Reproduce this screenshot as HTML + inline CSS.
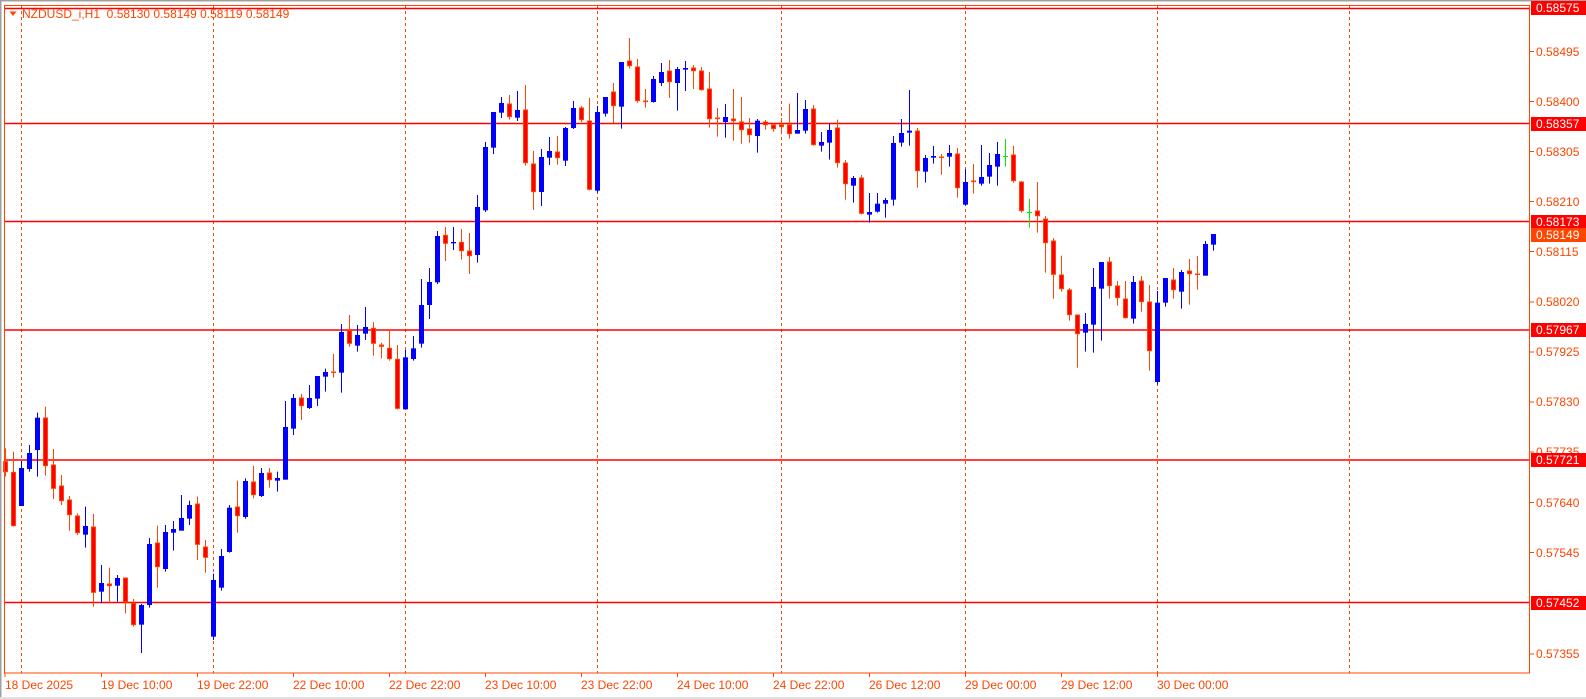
<!DOCTYPE html>
<html><head><meta charset="utf-8">
<style>
html,body{margin:0;padding:0;background:#fff;}
body{width:1586px;height:699px;position:relative;overflow:hidden;font-family:"Liberation Sans",sans-serif;}
svg{position:absolute;left:0;top:0;}
.lbl{position:absolute;font-size:12px;color:#ff4500;line-height:14px;white-space:nowrap;}
.box{position:absolute;left:1531px;width:55px;height:14px;background:#ff0000;color:#fff;font-size:12px;line-height:14px;padding-left:5px;box-sizing:border-box;}
</style></head><body>
<svg id="c" width="1586" height="699" xmlns="http://www.w3.org/2000/svg">
<rect x="0" y="0" width="1586" height="1.5" fill="#a0a0a0"/>
<rect x="0" y="0" width="1.5" height="699" fill="#a0a0a0"/>
<rect x="0" y="697" width="1586" height="2" fill="#e0e0e0"/>
<g stroke="#ff4500" stroke-width="1" stroke-dasharray="3,3">
<line x1="21.5" y1="5" x2="21.5" y2="673"/>
<line x1="213.5" y1="5" x2="213.5" y2="673"/>
<line x1="405.5" y1="5" x2="405.5" y2="673"/>
<line x1="597.5" y1="5" x2="597.5" y2="673"/>
<line x1="781.5" y1="5" x2="781.5" y2="673"/>
<line x1="965.5" y1="5" x2="965.5" y2="673"/>
<line x1="1157.5" y1="5" x2="1157.5" y2="673"/>
<line x1="1349.5" y1="5" x2="1349.5" y2="673"/>
</g>
<g stroke="#ff0000" stroke-width="1.5">
<line x1="4" y1="8.5" x2="1530" y2="8.5"/>
<line x1="4" y1="123.5" x2="1530" y2="123.5"/>
<line x1="4" y1="221.5" x2="1530" y2="221.5"/>
<line x1="4" y1="330" x2="1530" y2="330"/>
<line x1="4" y1="460" x2="1530" y2="460"/>
<line x1="4" y1="602.5" x2="1530" y2="602.5"/>
</g>
<g id="cd"></g>
<rect x="4.5" y="5.5" width="1525" height="667.5" fill="none" stroke="#ff4500" stroke-width="1"/>
<g stroke="#ff4500" stroke-width="1">
<line x1="5" y1="673" x2="5" y2="677"/><line x1="101.5" y1="673" x2="101.5" y2="677"/>
<line x1="197.5" y1="673" x2="197.5" y2="677"/><line x1="293.5" y1="673" x2="293.5" y2="677"/>
<line x1="389.5" y1="673" x2="389.5" y2="677"/><line x1="485.5" y1="673" x2="485.5" y2="677"/>
<line x1="581.5" y1="673" x2="581.5" y2="677"/><line x1="677.5" y1="673" x2="677.5" y2="677"/>
<line x1="773.5" y1="673" x2="773.5" y2="677"/><line x1="869.5" y1="673" x2="869.5" y2="677"/>
<line x1="965.5" y1="673" x2="965.5" y2="677"/><line x1="1061.5" y1="673" x2="1061.5" y2="677"/>
<line x1="1157.5" y1="673" x2="1157.5" y2="677"/>
<line x1="1530" y1="51.5" x2="1534" y2="51.5"/><line x1="1530" y1="101.5" x2="1534" y2="101.5"/>
<line x1="1530" y1="151.5" x2="1534" y2="151.5"/><line x1="1530" y1="201.5" x2="1534" y2="201.5"/>
<line x1="1530" y1="251.5" x2="1534" y2="251.5"/><line x1="1530" y1="302" x2="1534" y2="302"/>
<line x1="1530" y1="352" x2="1534" y2="352"/><line x1="1530" y1="402" x2="1534" y2="402"/>
<line x1="1530" y1="452" x2="1534" y2="452"/><line x1="1530" y1="502.5" x2="1534" y2="502.5"/>
<line x1="1530" y1="552.5" x2="1534" y2="552.5"/><line x1="1530" y1="654" x2="1534" y2="654"/>
</g>
<polygon points="9.5,11.5 16.5,11.5 13,16" fill="#ff4500"/>
</svg>
<div class="lbl" style="left:22px;top:7px;">NZDUSD_i,H1&nbsp; 0.58130 0.58149 0.58119 0.58149</div>

<div class="lbl" style="left:1536px;top:44.5px;">0.58495</div>
<div class="lbl" style="left:1536px;top:94.5px;">0.58400</div>
<div class="lbl" style="left:1536px;top:144.5px;">0.58305</div>
<div class="lbl" style="left:1536px;top:194.5px;">0.58210</div>
<div class="lbl" style="left:1536px;top:244.5px;">0.58115</div>
<div class="lbl" style="left:1536px;top:295px;">0.58020</div>
<div class="lbl" style="left:1536px;top:345px;">0.57925</div>
<div class="lbl" style="left:1536px;top:395px;">0.57830</div>
<div class="lbl" style="left:1536px;top:445px;">0.57735</div>
<div class="lbl" style="left:1536px;top:495.5px;">0.57640</div>
<div class="lbl" style="left:1536px;top:545.5px;">0.57545</div>
<div class="lbl" style="left:1536px;top:647px;">0.57355</div>

<div class="box" style="top:1px;">0.58575</div>
<div class="box" style="top:117px;">0.58357</div>
<div class="box" style="top:214.5px;">0.58173</div>
<div class="box" style="top:228px;background:#ff4500;">0.58149</div>
<div class="box" style="top:323px;">0.57967</div>
<div class="box" style="top:452.5px;">0.57721</div>
<div class="box" style="top:595.5px;">0.57452</div>

<div class="lbl" style="left:5px;top:678px;">18 Dec 2025</div>
<div class="lbl" style="left:101px;top:678px;">19 Dec 10:00</div>
<div class="lbl" style="left:197px;top:678px;">19 Dec 22:00</div>
<div class="lbl" style="left:293px;top:678px;">22 Dec 10:00</div>
<div class="lbl" style="left:389px;top:678px;">22 Dec 22:00</div>
<div class="lbl" style="left:485px;top:678px;">23 Dec 10:00</div>
<div class="lbl" style="left:581px;top:678px;">23 Dec 22:00</div>
<div class="lbl" style="left:677px;top:678px;">24 Dec 10:00</div>
<div class="lbl" style="left:773px;top:678px;">24 Dec 22:00</div>
<div class="lbl" style="left:869px;top:678px;">26 Dec 12:00</div>
<div class="lbl" style="left:965px;top:678px;">29 Dec 00:00</div>
<div class="lbl" style="left:1061px;top:678px;">29 Dec 12:00</div>
<div class="lbl" style="left:1157px;top:678px;">30 Dec 00:00</div>

<script>
var segs=[
[380,0,[
['r',245,278,205,290],['r',277,440,215,440],['b',264,378,243,378],['b',219,267,195,275],['b',113,210,98,290],
['r',114,260,80,287],['r',255,328,207,357],['r',318,365,285,375],['r',360,407,348,452],['r',408,461,400,465],
['b',438,464,380,503],['r',441,640,402,680],['b',609,635,555,670],['r',612,620,563,670],['b',594,617,585,665],
['r',594,668,594,700],['r',670,737,657,740],['b',675,734,672,819],['b',492,675,474,683],['r',489,563,437,623],
['b',456,567,435,575],['b',447,458,423,512],['b',414,452,345,452],['b',375,416,362,435],['r',372,496,350,540],
['r',501,535,480,578],['b',600,770,581,780],['b',528,623,507,632],['b',383,516,375,518],['r',381,410,302,458],
['b',303,411,295,416],['r',306,347,258,355],['b',279,348,264,351],['r',279,302,264,323],['b',294,302,275,335],
['b',141,299,63,299],['b',54,146,42,165]]],
[30,37,[
['r',1104,1130,1092,1170],['b',1104,1134,1065,1137],['b',1038,1106,1038,1128],['b',1026,1040,1016,1085],['r',1026,1030,972,1043],
['b',906,1028,882,1088],['r',902,943,855,950],['b',915,947,885,965],['b',891,911,831,930],['r',895,943,876,977],
['r',945,952,938,985],['r',955,989,903,992],['r',988,1138,945,1138],['b',982,1138,960,1138],['b',955,987,918,992],
['b',825,941,747,953],['b',756,825,714,867],['b',618,757,603,762],['r',616,643,591,693],['b',636,640,591,660],
['r',637,665,597,689],['r',663,680,609,732],['b',531,675,495,698],['b',351,541,336,546],['b',246,353,246,372],
['b',219,248,201,264],['r',222,263,195,269],['b',240,263,183,273],['r',240,401,165,407],['r',402,488,363,540],
['b',381,486,357,528],['b',363,383,321,405],['r',366,386,318,404],['b',294,392,291,408],['b',234,294,213,297],
['r',234,272,228,276],['r',273,481,204,481]]],
[30,74,[
['b',246,482,228,488],['b',201,251,201,260],['r',186,230,159,280],['b',96,230,96,296],['r',93,110,24,116],
['r',111,215,87,218],['r',213,218,177,233],['b',147,216,138,218],['b',126,159,99,168],['r',123,158,90,204],
['b',117,159,111,242],['b',114,119,93,183],['r',114,125,105,177],['r',123,182,111,182],['r',177,269,126,293],
['r',264,269,234,320],['b',261,276,222,323],['r',267,275,177,332],['r',276,302,201,341],['r',297,317,264,338],
['b',272,318,267,368],['r',276,287,270,299],['r',285,299,279,305],['r',285,293,264,306],['r',285,314,221,326],
['b',300,311,189,311],['b',237,302,210,311],['r',237,347,225,347],['b',336,347,306,365],['b',300,338,282,389],
['r',294,401,269,413],['r',399,464,390,509],['b',444,467,438,518],['r',444,553,435,553],['b',546,554,489,578],
['b',521,545,489,548],['b',510,521,504,563],['b',339,509,318,527],['b',309,338,267,350],['b',302,308,180,347],
['r',303,425,294,473]]],
[100,115,[
['b',174,215,165,248],['b',168,173,138,191],['r',171,175,162,224],['b',159,170,135,200],['r',162,266,144,293],
['b',246,314,207,317],['r',243,248,192,281],['b',231,251,135,257],['b',195,230,159,251],['b',162,200,126,257],
['g',168,171,117,200],['r',165,245,138,248],['r',246,335,243,338],['g',336,339,297,383],['r',333,350,246,398],
['r',357,431,348,518],['r',423,526,414,596],['r',525,569,467,575],['r',570,647,564,662],['r',645,704,645,803],
['b',672,698,639,755],['b',561,674,504,758],['b',486,566,486,722],['r',486,560,471,596],['r',558,596,543,617],
['r',597,656,543,656],['b',546,656,528,671],['r',543,608,528,635],['r',606,755,555,812],['b',608,846,573,853],
['b',534,608,534,620],['r',540,572,504,596],['b',516,575,510,626],['r',513,524,477,614],['r',522,524,468,569],
['b',432,527,423,527],['b',402,434,402,452]]]
];
var NS="http://www.w3.org/2000/svg",g=document.getElementById('cd'),h='';
segs.forEach(function(s){var off=s[0],k0=s[1];s[2].forEach(function(c,i){
 var k=k0+i,x=Math.round(5.3+8*k);var bt=c[1]/3+off,bb=c[2]/3+off,wt=c[3]/3+off,wb=Math.min(c[4]/3+off,672);
 var col=c[0]=='b'?'#0000ff':(c[0]=='g'?'#00ee00':'#ff4500');
 h+='<line x1="'+(x+0.5)+'" y1="'+wt+'" x2="'+(x+0.5)+'" y2="'+wb+'" stroke="'+col+'" stroke-width="1"/>';
 var hh=Math.max(bb-bt,1);
 if(c[0]=='b')h+='<rect x="'+(x-2)+'" y="'+bt+'" width="5" height="'+hh+'" fill="#0000ff"/>';
 else if(c[0]=='g')h+='<rect x="'+(x-2)+'" y="'+bt+'" width="5" height="1" fill="#00ee00"/>';
 else h+='<rect x="'+(x-1.5)+'" y="'+bt+'" width="4" height="'+Math.max(hh-1,0.5)+'" fill="#ff0000" stroke="#ff4500" stroke-width="1"/>';
});});
g.innerHTML=h;
</script>
</body></html>
